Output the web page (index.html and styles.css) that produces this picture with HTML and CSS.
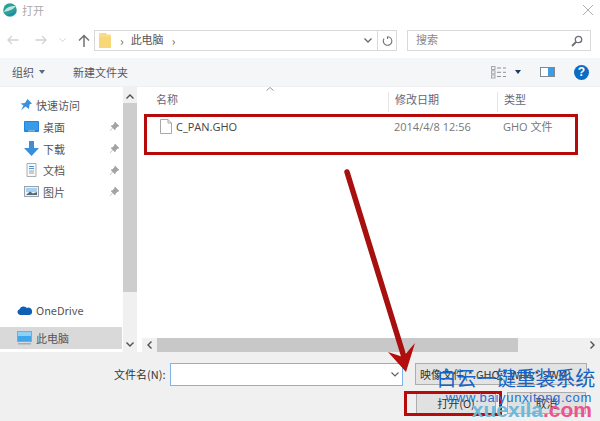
FILE: index.html
```html
<!DOCTYPE html>
<html lang="zh">
<head>
<meta charset="utf-8">
<title>打开</title>
<link rel="stylesheet" href="styles.css">
</head>
<body>
<div class="dialog">
  <header class="titlebar">
    <svg class="app-icon" viewBox="0 0 14 14" width="14" height="14"><circle cx="7" cy="7" r="6.8" fill="#2aa198"/><path d="M1 9C3 4 7 3 13 3 11 6 7 8 1 9Z" fill="#bfe6dc"/><path d="M3 12c3 0 7-1 10-5-1 4-5 7-10 5Z" fill="#1b7fb0"/></svg>
    <span class="title">打开</span>
    <svg class="close" viewBox="0 0 10 10" width="10" height="10"><path d="M0 0 10 10M10 0 0 10" stroke="#9a9a9a" stroke-width="0.8" fill="none"/></svg>
  </header>

  <nav class="navbar">
    <div class="nav-buttons">
      <svg class="nav-back" viewBox="0 0 12 10" width="12" height="10"><path d="M11.5 5H1M5 1 1 5l4 4" stroke="#cfd3d6" stroke-width="1.3" fill="none"/></svg>
      <svg class="nav-fwd" viewBox="0 0 12 10" width="12" height="10"><path d="M.5 5H11M7 1l4 4-4 4" stroke="#cfd3d6" stroke-width="1.3" fill="none"/></svg>
      <svg class="nav-down" viewBox="0 0 7 4" width="7" height="4"><path d="M.5.5 3.5 3.5 6.500.5" stroke="#d4d4d4" stroke-width="1" fill="none"/></svg>
      <svg class="nav-up" viewBox="0 0 12 13" width="12" height="13"><path d="M6 13V1.500M1 6.500 6 1.500l5 5" stroke="#6f7275" stroke-width="1.500" fill="none"/></svg>
    </div>
    <div class="address">
      <svg class="folder" viewBox="0 0 12 15" width="12" height="15"><path d="M1 0h6l1 1.500h3a1 1 0 0 1 1 1V14a1 1 0 0 1-1 1H1a1 1 0 0 1-1-1V1a1 1 0 0 1 1-1Z" fill="#fbdc86"/><path d="M0 14V4h12v10a1 1 0 0 1-1 1H1a1 1 0 0 1-1-1Z" fill="#f7d56f" opacity=".7"/></svg>
      <span class="crumb-sep first">›</span>
      <span class="crumb">此电脑</span>
      <span class="crumb-sep">›</span>
      <svg class="addr-chev" viewBox="0 0 8 5" width="8" height="5"><path d="M.5.500 4 4 7.500.500" stroke="#5f6a72" stroke-width="1.300" fill="none"/></svg>
      <div class="refresh">
        <svg viewBox="0 0 11 12" width="11" height="12"><path d="M5.500 1.500V4M5.500 1.700A4.300 4.300 0 1 1 2 3.600" stroke="#6b7378" stroke-width="1.100" fill="none"/></svg>
      </div>
    </div>
    <div class="search">
      <span class="search-label">搜索</span>
      <svg viewBox="0 0 12 12" width="12" height="12"><circle cx="7.500" cy="4.500" r="3.200" stroke="#6a7075" stroke-width="1.300" fill="none"/><path d="M5 7 1 11" stroke="#6a7075" stroke-width="1.800"/></svg>
    </div>
  </nav>

  <div class="toolbar">
    <span class="tool organize">组织</span>
    <span class="caret"></span>
    <span class="tool newfolder">新建文件夹</span>
    <div class="tool-right">
      <svg class="view-icon" viewBox="0 0 15 13" width="15" height="13"><rect x=".5" y=".5" width="3.500" height="3" fill="#eef0f2" stroke="#a5a9ad"/><rect x=".5" y="4.800" width="3.500" height="3" fill="#eef0f2" stroke="#a5a9ad"/><rect x=".5" y="9" width="3.500" height="3" fill="#eef0f2" stroke="#a5a9ad"/><path d="M6 2h4M12 2h3M6 6.300h4M12 6.300h3M6 10.500h4M12 10.500h3" stroke="#8d9296" stroke-width="1" fill="none"/></svg>
      <span class="caret dark"></span>
      <svg class="pane-icon" viewBox="0 0 15 10" width="15" height="10"><rect x=".5" y=".5" width="14" height="9" fill="#fff" stroke="#7d8a96"/><rect x="8" y="1" width="6" height="8" fill="#3f9be2"/></svg>
      <span class="help">?</span>
    </div>
  </div>

  <main class="content">
    <aside class="sidebar">
      <div class="tree">
        <div class="tree-head quick">
          <svg viewBox="0 0 12 12" width="12" height="12"><path d="M7.500 0 12 4.500 9.500 5.500 9 10 5.500 7.500 1 11.500 3.500 6.500.5 4.500 5 4Z" fill="#3d8fdc"/></svg>
          <span>快速访问</span>
        </div>
        <div class="tree-item">
          <svg viewBox="0 0 15 11" width="15" height="11"><rect width="15" height="11" rx="1" fill="#1f86dc"/><rect x="1" y="1" width="13" height="8" fill="#3a9be8"/><rect x="4" y="9.500" width="7" height=".8" fill="#cde"/></svg>
          <span class="item-label">桌面</span>
          <svg class="pin" viewBox="0 0 9 9" width="9" height="9"><path d="M5 0 9 4 7.500 4.500 5.500 6.500 5 8 1 4 2.500 3.500 4.500 1.500ZM2.500 6 0 9" fill="#a3a3a3" stroke="#a3a3a3" stroke-width=".6"/></svg>
        </div>
        <div class="tree-item">
          <svg viewBox="0 0 15 15" width="15" height="15"><path d="M5 0h5v7h5l-7.500 8L0 7h5Z" fill="#3c8ddb"/></svg>
          <span class="item-label">下载</span>
          <svg class="pin" viewBox="0 0 9 9" width="9" height="9"><path d="M5 0 9 4 7.500 4.500 5.500 6.500 5 8 1 4 2.500 3.500 4.500 1.500ZM2.500 6 0 9" fill="#a3a3a3" stroke="#a3a3a3" stroke-width=".6"/></svg>
        </div>
        <div class="tree-item">
          <svg viewBox="0 0 15 14" width="15" height="14"><path d="M3 .5h9v13H3Z" fill="#f8f8f8" stroke="#a9adb2"/><path d="M5 3.500h5M5 5.500h5" stroke="#4a94d8"/><path d="M5 8h5M5 10h5" stroke="#9aa0a6"/></svg>
          <span class="item-label">文档</span>
          <svg class="pin" viewBox="0 0 9 9" width="9" height="9"><path d="M5 0 9 4 7.500 4.500 5.500 6.500 5 8 1 4 2.500 3.500 4.500 1.500ZM2.500 6 0 9" fill="#a3a3a3" stroke="#a3a3a3" stroke-width=".6"/></svg>
        </div>
        <div class="tree-item">
          <svg viewBox="0 0 15 11" width="15" height="11"><rect x=".5" y=".5" width="14" height="10" fill="#eef2f5" stroke="#9aa4ad"/><rect x="2" y="2" width="11" height="4" fill="#a9d0ee"/><path d="M2 9 6 5.500 9 7.500 13 6V9Z" fill="#4e6b7a"/></svg>
          <span class="item-label">图片</span>
          <svg class="pin" viewBox="0 0 9 9" width="9" height="9"><path d="M5 0 9 4 7.500 4.500 5.500 6.500 5 8 1 4 2.500 3.500 4.500 1.500ZM2.500 6 0 9" fill="#a3a3a3" stroke="#a3a3a3" stroke-width=".6"/></svg>
        </div>
      </div>
      <div class="tree-bottom">
        <div class="tree-head drive">
          <svg viewBox="0 0 15 9" width="15" height="9"><path d="M3 9a3 3 0 0 1-.5-5.800A4.500 4.500 0 0 1 10 2a3.500 3.500 0 0 1 5 3.500A3 3 0 0 1 12.500 9Z" fill="#0f5fb5"/></svg>
          <span>OneDrive</span>
        </div>
        <div class="tree-head pc">
          <svg viewBox="0 0 15 14" width="15" height="14"><rect x=".5" y=".5" width="14" height="10" fill="#3fa6ea" stroke="#7fa9c6"/><path d="M1 1h13v4H1Z" fill="#8fd0f6"/><rect x="1" y="12" width="13" height="1.500" fill="#a5adb4"/></svg>
          <span>此电脑</span>
        </div>
      </div>
    </aside>

    <div class="v-scroll">
      <svg viewBox="0 0 8 5" width="8" height="5"><path d="M.5 4.500 4 1l3.500 3.500" stroke="#505050" stroke-width="1.400" fill="none"/></svg>
      <div class="v-thumb"></div>
      <svg viewBox="0 0 8 5" width="8" height="5"><path d="M.5.500 4 4l3.500-3.500" stroke="#505050" stroke-width="1.400" fill="none"/></svg>
    </div>

    <section class="files">
      <div class="file-header">
        <svg class="sort" viewBox="0 0 8 4" width="8" height="4"><path d="M.5 3.500 4 .5l3.500 3" stroke="#9a9a9a" fill="none"/></svg>
        <div class="col name">名称</div>
        <div class="col date">修改日期</div>
        <div class="col type">类型</div>
      </div>
      <div class="file-row">
        <div class="cell-name">
          <svg viewBox="0 0 12 15" width="12" height="15"><path d="M.5.500h7.500l3.500 3.500v10.500H.5Z" fill="#fff" stroke="#a8a8a8"/><path d="M8 .5V4h3.500" fill="none" stroke="#a8a8a8"/></svg>
          <span class="fname">C_PAN.GHO</span>
        </div>
        <div class="cell-date">2014/4/8 12:56</div>
        <div class="cell-type">GHO 文件</div>
      </div>
      <div class="h-scroll">
        <svg class="h-left" viewBox="0 0 5 8" width="5" height="8"><path d="M4.500.500 1 4l3.500 3.500" stroke="#505050" stroke-width="1.400" fill="none"/></svg>
        <div class="h-thumb"></div>
        <svg class="h-right" viewBox="0 0 5 8" width="5" height="8"><path d="M.5.500 4 4 .5 7.500" stroke="#505050" stroke-width="1.400" fill="none"/></svg>
      </div>
    </section>
  </main>

  <footer class="footer">
    <div class="form-row">
      <label class="fn-label">文件名(N):</label>
      <div class="fn-input">
        <svg viewBox="0 0 8 5" width="8" height="5"><path d="M.5.500 4 4l3.500-3.500" stroke="#606060" stroke-width="1.100" fill="none"/></svg>
      </div>
      <div class="filter">映像文件(*.GHO;*.WIM;*.SWM)</div>
    </div>
    <div class="button-row">
      <button class="btn open">打开(O)</button>
      <button class="btn cancel">取消</button>
    </div>
  </footer>

  <div class="mark-row"></div>
  <div class="mark-btn"></div>
  <svg class="arrow" viewBox="0 0 600 421" width="600" height="421">
    <path d="M347 172 404 357" stroke="#a81010" stroke-width="5.500" stroke-linecap="round" fill="none"/>
    <path d="M388 352 406 372 415 343 403 357Z" fill="#b50c0c"/>
  </svg>
  <div class="watermark">
    <div class="wm1">白云一键重装系统</div>
    <div class="wm2">www.baiyunxitong.com</div>
    <div class="wm3"><span class="wm3a">xuexila</span><span class="wm3b">.com</span></div>
  </div>
</div>
</body>
</html>
```
FILE: styles.css
```css
* { box-sizing: border-box; }
html, body { margin: 0; padding: 0; }
body { width: 600px; height: 421px; overflow: hidden; background: #fff; font-family: "Noto Sans CJK SC", "Open Sans", sans-serif; font-size: 11px; color: #444; }
svg { display: block; flex: none; }
.dialog { position: relative; width: 600px; height: 421px; display: flex; flex-direction: column; overflow: hidden; }

.titlebar { height: 30px; flex: none; display: flex; align-items: flex-start; padding: 3px 0 0 3px; }
.title { margin: 0 0 0 5px; color: #aaa; font-size: 11px; line-height: 14px; }
.close { margin: 2px 7px 0 auto; }

.navbar { height: 28px; flex: none; display: flex; align-items: flex-start; }
.nav-buttons { width: 94px; height: 20px; display: flex; align-items: center; padding-left: 7px; }
.nav-fwd { margin-left: 16px; }
.nav-down { margin-left: 12px; }
.nav-up { margin-left: 12px; }
.address { width: 303px; height: 21px; border: 1px solid #d9d9d9; display: flex; align-items: center; padding-left: 4px; }
.crumb-sep { color: #666; font-size: 12px; margin-left: 8px; }
.crumb-sep.first { margin-left: 9px; margin-right: 7px; }
.crumb { color: #555; font-size: 11px; line-height: 17px; margin-bottom: 2px; }
.addr-chev { margin-left: auto; margin-right: 5px; }
.refresh { width: 19px; height: 100%; border-left: 1px solid #d9d9d9; display: flex; align-items: center; justify-content: center; }
.search { width: 184px; height: 21px; margin-left: 10px; border: 1px solid #d9d9d9; display: flex; align-items: center; justify-content: space-between; padding: 0 7px 0 8px; }
.search-label { color: #888; font-size: 11px; line-height: 17px; margin-bottom: 2px; }

.toolbar { height: 29px; flex: none; background: #f5f6f7; border-bottom: 1px solid #eef0f1; display: flex; align-items: center; padding-left: 12px; }
.tool { color: #556; font-size: 11px; }
.caret { width: 0; height: 0; margin-left: 5px; border: 3.500px solid transparent; border-top: 4px solid #5a6a7a; border-bottom: 0; }
.caret.dark { margin-left: 9px; border-top-color: #1f3a5f; }
.newfolder { margin-left: 28px; }
.tool-right { margin-left: auto; display: flex; align-items: center; padding-right: 11px; }
.pane-icon { margin-left: 19px; }
.help { width: 15px; height: 15px; margin-left: 19px; border-radius: 50%; background: #0b6cc4; color: #fff; font: bold 12px/15px "Liberation Sans", sans-serif; text-align: center; }

.content { height: 265px; flex: none; display: flex; }
.sidebar { width: 122px; flex: none; display: flex; flex-direction: column; justify-content: space-between; padding-bottom: 3px; }
.tree { padding-top: 8px; }
.tree-head { display: flex; align-items: center; height: 20px; padding-left: 20px; color: #555; }
.tree-head.quick { margin-bottom: 1px; }
.tree-head span { margin-left: 4px; }
.tree-item { display: flex; align-items: center; height: 21.700px; padding-left: 24px; color: #555; }
.tree-item > svg:first-child { margin-right: 4px; }
.item-label { width: 67px; }
.tree-bottom { display: flex; flex-direction: column; }
.tree-head.drive { height: 22px; padding-left: 17px; margin-bottom: 6px; }
.tree-head.pc { height: 22px; padding-left: 17px; background: #d9d9d9; }
.v-scroll { width: 14px; margin-left: 1px; flex: none; background: #f0f0f0; display: flex; flex-direction: column; align-items: center; justify-content: space-between; padding: 7px 0 5px; }
.v-thumb { width: 14px; height: 190px; margin-top: 4px; margin-bottom: 50px; background: #cdcdcd; }

.files { flex: 1; display: flex; flex-direction: column; position: relative; margin-left: 1px; }
.file-header { height: 25px; flex: none; display: flex; color: #667; position: relative; padding-top: 5px; }
.sort { position: absolute; left: 128px; top: 0; }
.col { height: 20px; line-height: 15px; }
.col.name { width: 250px; padding-left: 18px; }
.col.date { width: 109px; padding-left: 6px; border-left: 1px solid #e5e5e5; }
.col.type { flex: 1; padding-left: 6px; border-left: 1px solid #e5e5e5; }
.file-row { flex: 1; display: flex; align-items: flex-start; padding-top: 7px; color: #666; }
.cell-name { width: 250px; display: flex; align-items: center; padding-left: 22px; }
.fname { margin-left: 4px; color: #444; font-size: 11px; line-height: 15px; font-family: "Open Sans", sans-serif; }
.cell-date { width: 109px; padding-left: 6px; line-height: 15px; font-family: "Open Sans", "Noto Sans CJK SC", sans-serif; color: #777; }
.cell-type { flex: 1; padding-left: 6px; line-height: 15px; color: #777; font-family: "Open Sans", "Noto Sans CJK SC", sans-serif; }
.h-scroll { height: 14px; flex: none; display: flex; align-items: center; background: #f0f0f0; margin-left: 4px; padding-left: 5px; }
.h-thumb { width: 361px; height: 14px; margin-left: 5px; background: #c8c8c8; }
.h-right { margin-left: auto; margin-right: 5px; }

.footer { flex: 1; background: #f0f0f0; display: flex; flex-direction: column; padding: 11px 0 0 114px; }
.form-row { display: flex; align-items: flex-start; }
.fn-label { width: 56px; height: 23px; line-height: 23px; color: #333; font-size: 11px; white-space: nowrap; }
.fn-input { width: 233px; height: 23px; background: #fff; border: 1px solid #7eb4ea; display: flex; align-items: center; justify-content: flex-end; padding-right: 3px; }
.filter { width: 172px; height: 22px; margin-left: 12px; border: 1px solid #adadad; background: #e3e3e3; line-height: 20px; font-size: 11px; color: #333; padding-left: 4px; white-space: nowrap; overflow: hidden; }
.button-row { display: flex; padding: 6px 0 0 302px; }
.btn { height: 22px; border: 1px solid #adadad; background: #e1e1e1; font: 11px "Noto Sans CJK SC", sans-serif; color: #333; padding: 0 0 0 0; }
.btn.open { width: 80px; }
.btn.cancel { width: 79px; margin-left: 11px; }

.mark-row { position: absolute; left: 144px; top: 114px; width: 434px; height: 41px; border: 3px solid #b70a0a; }
.mark-btn { position: absolute; left: 404px; top: 391px; width: 98px; height: 25px; border: 3px solid #b70a0a; }
.arrow { position: absolute; left: 0; top: 0; }
.watermark { position: absolute; left: 430px; top: 367px; width: 170px; text-align: right; font-family: "Liberation Sans", "Noto Sans CJK SC", sans-serif; }
.wm1 { position: absolute; right: 5px; top: 0; font-size: 20px; line-height: 22px; color: #1565c8; white-space: nowrap; letter-spacing: -.2px; font-family: "Noto Sans CJK SC", sans-serif; }
.wm2 { position: absolute; right: 8px; top: 23px; font-size: 13px; line-height: 15px; color: #1d6fd0; white-space: nowrap; letter-spacing: .7px; }
.wm3 { position: absolute; right: 8px; top: 31px; font-size: 21px; line-height: 24px; font-weight: bold; white-space: nowrap; }
.wm3a { color: #6db9da; }
.wm3b { color: #e8558f; }
```
